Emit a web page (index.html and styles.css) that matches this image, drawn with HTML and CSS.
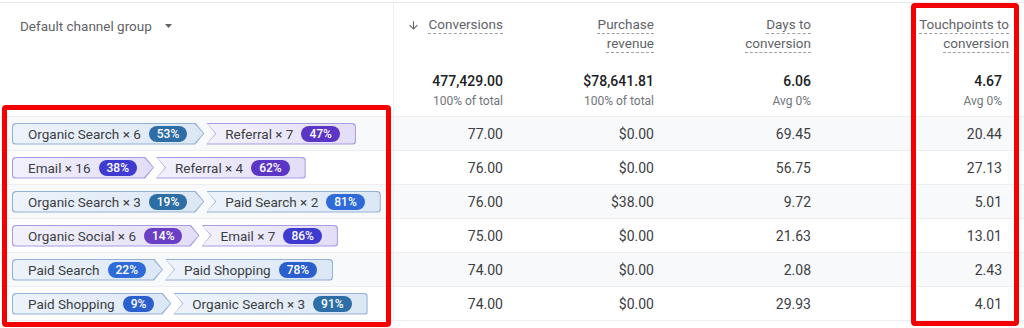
FILE: index.html
```html
<!DOCTYPE html>
<html lang="en">
<head>
    <meta charset="UTF-8">
    <title>Conversion paths</title>
    <link rel="stylesheet" href="styles.css">
</head>
<body>
    <div class="report">
        <div class="table">
            <!-- header + totals -->
            <div class="row head">
                <div class="cell dim-head">
                    <span>Default channel group</span>
                    <svg class="caret" width="7" height="4" viewBox="0 0 7 4"><path d="M0 0h7L3.5 4z" fill="#5f6368"/></svg>
                </div>
                <div class="cell metric first-metric">
                    <div class="title">
                        <svg class="sort" width="13" height="13" viewBox="0 0 24 24"><path d="M20 12l-1.41-1.41L13 16.17V4h-2v12.17l-5.58-5.59L4 12l8 8 8-8z" fill="#5f6368"/></svg>
                        <span class="label">Conversions</span>
                    </div>
                    <div class="total">477,429.00</div>
                    <div class="sub">100% of total</div>
                </div>
                <div class="cell metric">
                    <div class="title"><span class="label">Purchase<br>revenue</span></div>
                    <div class="total">$78,641.81</div>
                    <div class="sub">100% of total</div>
                </div>
                <div class="cell metric">
                    <div class="title"><span class="label">Days to<br>conversion</span></div>
                    <div class="total">6.06</div>
                    <div class="sub">Avg 0%</div>
                </div>
                <div class="cell metric last">
                    <div class="title"><span class="label">Touchpoints to<br>conversion</span></div>
                    <div class="total">4.67</div>
                    <div class="sub">Avg 0%</div>
                </div>
            </div>

            <div class="row shade">
                <div class="cell path">
                    <div class="step from blue"><div class="step-in">Organic Search × 6 <span class="pct c-organic">53%</span></div></div>
                    <div class="step to violet"><div class="step-in">Referral × 7 <span class="pct c-referral">47%</span></div></div>
                </div>
                <div class="cell num first-metric">77.00</div>
                <div class="cell num">$0.00</div>
                <div class="cell num">69.45</div>
                <div class="cell num last">20.44</div>
            </div>

            <div class="row">
                <div class="cell path">
                    <div class="step from violet"><div class="step-in">Email × 16 <span class="pct c-email">38%</span></div></div>
                    <div class="step to violet"><div class="step-in">Referral × 4 <span class="pct c-referral">62%</span></div></div>
                </div>
                <div class="cell num first-metric">76.00</div>
                <div class="cell num">$0.00</div>
                <div class="cell num">56.75</div>
                <div class="cell num last">27.13</div>
            </div>

            <div class="row shade">
                <div class="cell path">
                    <div class="step from blue"><div class="step-in">Organic Search × 3 <span class="pct c-organic">19%</span></div></div>
                    <div class="step to blue"><div class="step-in">Paid Search × 2 <span class="pct c-paid">81%</span></div></div>
                </div>
                <div class="cell num first-metric">76.00</div>
                <div class="cell num">$38.00</div>
                <div class="cell num">9.72</div>
                <div class="cell num last">5.01</div>
            </div>

            <div class="row">
                <div class="cell path">
                    <div class="step from violet"><div class="step-in">Organic Social × 6 <span class="pct c-social">14%</span></div></div>
                    <div class="step to violet"><div class="step-in">Email × 7 <span class="pct c-email">86%</span></div></div>
                </div>
                <div class="cell num first-metric">75.00</div>
                <div class="cell num">$0.00</div>
                <div class="cell num">21.63</div>
                <div class="cell num last">13.01</div>
            </div>

            <div class="row shade">
                <div class="cell path">
                    <div class="step from blue"><div class="step-in">Paid Search <span class="pct c-paid">22%</span></div></div>
                    <div class="step to blue"><div class="step-in">Paid Shopping <span class="pct c-shopping">78%</span></div></div>
                </div>
                <div class="cell num first-metric">74.00</div>
                <div class="cell num">$0.00</div>
                <div class="cell num">2.08</div>
                <div class="cell num last">2.43</div>
            </div>

            <div class="row">
                <div class="cell path">
                    <div class="step from blue"><div class="step-in">Paid Shopping <span class="pct c-shopping">9%</span></div></div>
                    <div class="step to blue"><div class="step-in">Organic Search × 3 <span class="pct c-organic">91%</span></div></div>
                </div>
                <div class="cell num first-metric">74.00</div>
                <div class="cell num">$0.00</div>
                <div class="cell num">29.93</div>
                <div class="cell num last">4.01</div>
            </div>
        </div>

        <!-- highlight boxes drawn over the table -->
        <div class="mark mark-paths"></div>
        <div class="mark mark-touch"></div>
    </div>
</body>
</html>
```

FILE: styles.css
```css
body {
    margin: 0;
    background: #fff;
    font-family: Roboto, "Noto Sans", Arial, sans-serif;
    color: #3c4043;
}
.report {
    position: relative;
    width: 1024px;
    height: 328px;
    padding-top: 2px;
    box-sizing: border-box;
}
.table {
    border-top: 1px solid #e8eaed;
}
.row {
    display: grid;
    grid-template-columns: 393px 126px 151px 157px 1fr;
    height: 34px;
    border-bottom: 1px solid #eceef0;
    box-sizing: border-box;
}
.row.head {
    height: 114px;
}
.row.shade {
    background: #f8f9fa;
}
.cell {
    padding: 0 16px;
    display: flex;
    align-items: center;
    justify-content: flex-end;
    font-size: 14px;
}
.first-metric {
    border-left: 1px solid #eceef0;
}
.cell.last {
    padding-right: 22px;
}

/* header */
.dim-head {
    justify-content: flex-start;
    align-items: flex-start;
    padding: 13px 0 0 20px;
    color: #5f6368;
    font-size: 13.5px;
    line-height: 20px;
}
.caret {
    margin: 8px 0 0 13px;
}
.metric {
    flex-direction: column;
    align-items: flex-end;
    justify-content: flex-start;
    padding-top: 12px;
}
.metric.last {
    padding-right: 15px;
}
.metric.last .total,
.metric.last .sub {
    margin-right: 7px;
}
.title {
    display: flex;
    align-items: flex-start;
    height: 40px;
    color: #5f6368;
    font-size: 13.5px;
    line-height: 19px;
    text-align: right;
}
.label {
    text-decoration: underline dashed #9aa0a6;
    text-decoration-thickness: 1px;
    text-underline-offset: 4px;
}
.sort {
    margin: 4px 8px 0 0;
}
.total {
    margin-top: 16px;
    color: #202124;
    font-weight: 500;
    font-size: 14px;
    line-height: 20px;
}
.sub {
    margin-top: 2px;
    color: #70757a;
    font-size: 12px;
    line-height: 16px;
}

/* data */
.num {
    color: #3c4043;
}
.path {
    justify-content: flex-start;
    padding-left: 12px;
}
.step {
    padding: 1px;
    height: 22px;
    box-sizing: border-box;
}
.step-in {
    height: 20px;
    display: flex;
    align-items: center;
    gap: 8px;
    font-size: 13.5px;
    color: #3c4043;
    white-space: nowrap;
}
.step.from,
.step.from .step-in {
    border-radius: 4px 0 0 4px;
    clip-path: polygon(0 0, calc(100% - 9px) 0, 100% 50%, calc(100% - 9px) 100%, 0 100%);
}
.step.from .step-in {
    padding: 0 16px 0 15px;
}
.step.to {
    margin-left: 2px;
}
.step.to,
.step.to .step-in {
    border-radius: 0 4px 4px 0;
    clip-path: polygon(0 0, 100% 0, 100% 100%, 0 100%, 9px 50%);
}
.step.to .step-in {
    padding: 0 15px 0 18px;
}
.blue {
    background: #94b1d8;
}
.blue .step-in {
    background: linear-gradient(90deg, #edf3fb, #dce7f5);
}
.violet {
    background: #a89ce0;
}
.violet .step-in {
    background: linear-gradient(90deg, #f3f1fd, #e3ddf7);
}
.pct {
    height: 16px;
    line-height: 16px;
    padding: 0 8px;
    border-radius: 8px;
    color: #fff;
    font-size: 12px;
    font-weight: 500;
}
.c-organic { background: #2d6ea6; }
.c-referral { background: #5b36c6; }
.c-email { background: #3f3bd1; }
.c-social { background: #6b3fc5; }
.c-paid { background: #2f6bd8; }
.c-shopping { background: #2b5fcd; }

/* red highlight boxes */
.mark {
    position: absolute;
    border: 5px solid #f40000;
    border-radius: 4px;
    box-sizing: border-box;
}
.mark-paths {
    left: 2px;
    top: 105px;
    width: 389px;
    height: 222px;
}
.mark-touch {
    left: 911px;
    top: 3px;
    width: 108px;
    height: 323px;
}
```
